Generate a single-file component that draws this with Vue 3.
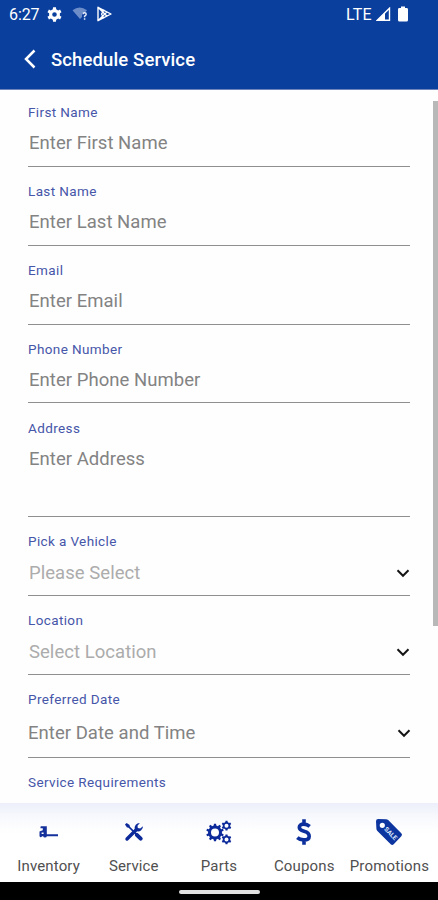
<script setup>
const fields = [
  { id: 'first', label: 'First Name', hint: 'Enter First Name' },
  { id: 'last', label: 'Last Name', hint: 'Enter Last Name' },
  { id: 'email', label: 'Email', hint: 'Enter Email' },
  { id: 'phone', label: 'Phone Number', hint: 'Enter Phone Number' },
  { id: 'address', label: 'Address', hint: 'Enter Address' },
  { id: 'vehicle', label: 'Pick a Vehicle', hint: 'Please Select', select: true },
  { id: 'location', label: 'Location', hint: 'Select Location', select: true },
  { id: 'date', label: 'Preferred Date', hint: 'Enter Date and Time', select: true },
  { id: 'requirements', label: 'Service Requirements' },
]

const tabs = ['Inventory', 'Service', 'Parts', 'Coupons', 'Promotions']

// Toothed ring outline with a round hole, for fill-rule evenodd.
function gear(cx, cy, outer, inner, hole, teeth) {
  const step = (Math.PI * 2) / teeth
  const pts = []
  for (let i = 0; i < teeth; i++) {
    const a = i * step + step / 2
    for (const [f, r] of [[-0.3, inner], [-0.19, outer], [0.19, outer], [0.3, inner]]) {
      pts.push(`${(cx + r * Math.cos(a + f * step)).toFixed(2)} ${(cy + r * Math.sin(a + f * step)).toFixed(2)}`)
    }
  }
  return `M${pts.join('L')}Z M${cx - hole} ${cy}a${hole} ${hole} 0 1 0 ${hole * 2} 0a${hole} ${hole} 0 1 0 ${-hole * 2} 0Z`
}

const settingsGear = gear(7.5, 7.5, 7.4, 5.5, 2.3, 6)
const partsGears = gear(9, 12.5, 8.8, 7, 4, 10) + gear(20.5, 5.7, 5, 3.8, 2, 6) + gear(20.5, 19.4, 5, 3.8, 2, 6)
</script>

<template>
  <div class="screen">
    <header class="top">
      <div class="status">
        <span class="clock">6:27</span>
        <svg class="s-gear" width="15" height="15" viewBox="0 0 15 15"><path :d="settingsGear" fill="#fff" fill-rule="evenodd" /></svg>
        <svg class="s-wifi" width="17" height="14" viewBox="0 0 17 14">
          <path d="M.5 3.2Q7.5-2 15 3.2L12.6 6H10v4L8 12Z" fill="#6d8dc9" />
          <path d="M11 7.2q0-1.5 1.6-1.5t1.6 1.5q0 1-1.6 2v1M12.6 11.3v1.4" fill="none" stroke="#e8eefb" stroke-width="1.5" />
        </svg>
        <svg class="s-play" width="17" height="16" viewBox="0 0 17 16">
          <path d="M2 1.300L15 8 2 14.700ZM2 1.300L10.800 10M2 14.700L10.800 6M5.500 8L8 3.500M5.500 8L8 12.500" fill="none" stroke="#fff" stroke-width="1.400" stroke-linejoin="round" />
        </svg>
        <span class="lte">LTE</span>
        <svg class="s-signal" width="15" height="14" viewBox="0 0 15 14">
          <path d="M1.3 13.2H13.5V1.2Z" fill="none" stroke="#fff" stroke-width="1.4" />
          <path d="M1 13.5L9 5.5v8Z" fill="#fff" />
        </svg>
        <svg class="s-battery" width="10" height="16" viewBox="0 0 10 16"><path d="M3 0.5h4v1.6h1.6q1.4 0 1.4 1.4v10.500q0 1.500-1.400 1.500H1.400Q0 15.500 0 14V3.500Q0 2.100 1.400 2.100H3Z" fill="#fff" /></svg>
      </div>
      <div class="titlebar">
        <svg class="back" width="12" height="20" viewBox="0 0 12 20"><path d="M10.500 1.500L2 10l8.500 8.500" fill="none" stroke="#fff" stroke-width="2.500" /></svg>
        <h1>Schedule Service</h1>
      </div>
    </header>

    <main class="form">
      <div v-for="f in fields" :key="f.id" class="field" :class="[f.id, { select: f.select }]">
        <div class="label">{{ f.label }}</div>
        <div v-if="f.hint" class="control">
          <span class="hint">{{ f.hint }}</span>
          <svg v-if="f.select" class="chevron" width="14" height="9" viewBox="0 0 14 9"><path d="M1.500 1.300L7 6.800l5.500-5.500" fill="none" stroke="#151515" stroke-width="2" /></svg>
        </div>
      </div>
      <div class="scrollbar"></div>
    </main>

    <nav class="tabs">
      <div v-for="t in tabs" :key="t" class="tab" :class="t.toLowerCase()">
        <div class="icon">
          <svg v-if="t === 'Inventory'" width="20" height="12" viewBox="0 0 20 12">
            <path fill-rule="evenodd" d="M1.500 .8Q1.500 .3 2.100.3H7.800V8.300H19V10.300H7.800Q7.600 11.500 6 11.500T4.200 10.300H3Q2.600 11.300 1.600 11.200T.5 10V5.500L3.800 4.300V2.200H1.500ZM2.600 6.500V8H4.600V6.500Z" fill="#14309a" />
          </svg>
          <svg v-else-if="t === 'Service'" width="20" height="20" viewBox="0 0 20 20">
            <path d="M4.200 4.200L15.500 15.500" stroke="#0c2a9a" stroke-width="1.700" />
            <path d="M1 2.600L2.600 1 5.600 3V5.500H3Z" fill="#0c2a9a" />
            <path d="M12.800 12.800L16.700 16.700" stroke="#0c2a9a" stroke-width="4" stroke-linecap="round" />
            <path d="M3 17L12.500 7.500" stroke="#0c2a9a" stroke-width="3.400" stroke-linecap="round" />
            <path d="M15.800 1A5 5 0 0 0 10.800 7.200L13 9.300A5 5 0 0 0 19 4.300L16.200 6.500 13.800 6.100 13.500 3.700Z" fill="#0c2a9a" />
          </svg>
          <svg v-else-if="t === 'Parts'" width="26" height="25" viewBox="0 0 26 25"><path :d="partsGears" fill="#0c2a9a" fill-rule="evenodd" /></svg>
          <svg v-else-if="t === 'Coupons'" width="18" height="28" viewBox="0 0 18 28">
            <path d="M14.700 8.300Q12 6.100 8.900 6.100 4.300 6.100 4.300 9.300 4.300 12 9 13.300 14.200 14.700 14.200 18.200 14.200 21.900 8.800 21.900 4.800 21.900 2.300 19.600M9 1.200V6.500M9 21.500V26.800" fill="none" stroke="#0c2f9c" stroke-width="3.600" />
          </svg>
          <svg v-else width="28" height="28" viewBox="0 0 28 28">
            <path fill-rule="evenodd" d="M1 3.200Q1 1 3.200 1L11 1.200Q12.300 1.200 13.200 2.100L26.300 15.300Q27.800 16.800 26.300 18.300L18.700 26.200Q17.200 27.700 15.700 26.200L2.400 13Q1.500 12.100 1.400 10.800ZM7.300 4.700A2.600 2.600 0 1 0 7.300 9.900 2.600 2.600 0 1 0 7.300 4.700Z" fill="#0c35a0" />
            <text class="sale" x="15.800" y="17.800" text-anchor="middle" transform="rotate(45 15.800 15.500)">SALE</text>
          </svg>
        </div>
        <span class="name">{{ t }}</span>
      </div>
    </nav>
    <div class="system"><div class="pill"></div></div>
  </div>
</template>

<style>
body { margin: 0; background: #fff; }
</style>

<style scoped>
.screen { width: 438px; height: 900px; display: flex; flex-direction: column; overflow: hidden; background: #fefefe; font-family: Roboto, "Liberation Sans", sans-serif; }
.top { height: 90px; box-sizing: border-box; background: #0a3f9e; border-bottom: 1px solid #6f83bd; color: #fff; flex: none; }
.status { height: 28px; display: flex; align-items: center; padding: 0 30px 0 9px; }
.clock { width: 38px; font-size: 16px; line-height: 28px; padding-top: 1px; letter-spacing: -0.1px; }
.s-wifi { margin-left: 10px; }
.s-play { margin-left: 7px; }
.lte { margin-left: auto; font-size: 16px; letter-spacing: 0.3px; }
.s-signal { margin-left: 4px; }
.s-battery { margin-left: 7px; }
.titlebar { height: 62px; display: flex; align-items: center; padding-left: 24px; }
h1 { margin: 1px 0 0 15px; font-size: 18.5px; line-height: 24px; font-weight: 500; letter-spacing: 0.12px; }
.form { flex: 1; min-height: 0; position: relative; overflow: hidden; padding: 14px 28px 0; }
.field { height: 63px; box-sizing: border-box; display: flex; flex-direction: column; border-bottom: 1px solid #8f8f8f; margin-bottom: 16px; }
.label { height: 16px; line-height: 16px; font-size: 13.5px; letter-spacing: 0.38px; color: #4656a9; white-space: nowrap; flex: none; }
.control { height: 45px; display: flex; align-items: center; justify-content: space-between; padding: 0 0 0 1px; }
.hint { font-size: 18.5px; line-height: 24px; letter-spacing: 0.04px; color: #838383; white-space: nowrap; }
.vehicle .control, .location .control { padding-top: 2px; }
.vehicle .hint, .location .hint { color: #acacac; }
.phone { height: 62px; margin-bottom: 17px; }
.address { height: 97px; }
.date { height: 67px; }
.date .control { height: 53px; padding: 2px 0 0 0; }
.date .chevron { margin-right: -1px; }
.requirements { border: 0; }
.scrollbar { position: absolute; right: 0; top: 11px; width: 5px; height: 525px; background: #b8b8b8; }
.tabs { height: 79px; flex: none; display: flex; padding: 0 6px; background: linear-gradient(#eceffa, #f8f9fd 14px, #fff 30px); }
.tab { flex: 1; display: flex; flex-direction: column; align-items: center; }
.icon { height: 52px; padding-top: 6px; box-sizing: border-box; display: flex; align-items: center; justify-content: center; }
.name { font-size: 15px; line-height: 22px; letter-spacing: 0.15px; color: #505050; white-space: nowrap; }
.sale { font: 700 6.500px Roboto, sans-serif; fill: #dce6fa; }
.system { height: 18px; flex: none; background: #000; display: flex; justify-content: center; align-items: center; }
.pill { width: 81px; height: 4px; border-radius: 2px; background: #e2e2e2; margin-top: 2px; }
</style>
